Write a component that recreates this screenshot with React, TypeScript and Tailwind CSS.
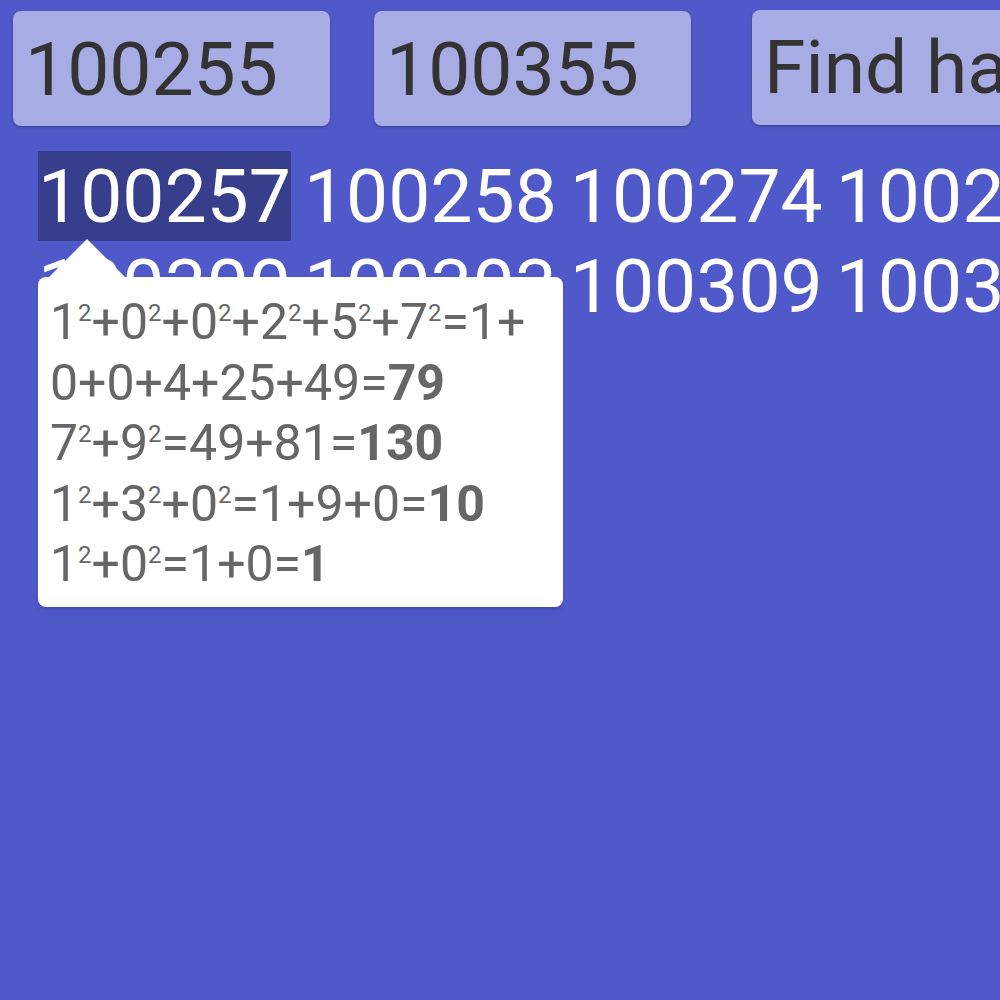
import React from "react";

const rows: string[][] = [
  ["100257", "100258", "100274", "100275", "100277", "100281", "100285", "100288", "100290", "100299"],
  ["100300", "100303", "100309", "100323", "100330", "100332", "100333", "100335", "100337", "100339"],
  ["100353"],
];

// each step: list of [digit, squared?] parts then the sum and result
type Part = { t: string; sq?: boolean };

const lines: { parts: Part[]; result?: string }[] = [
  {
    parts: [
      { t: "1", sq: true }, { t: "+" }, { t: "0", sq: true }, { t: "+" }, { t: "0", sq: true }, { t: "+" },
      { t: "2", sq: true }, { t: "+" }, { t: "5", sq: true }, { t: "+" }, { t: "7", sq: true }, { t: "=1+" },
    ],
  },
  { parts: [{ t: "0+0+4+25+49=" }], result: "79" },
  { parts: [{ t: "7", sq: true }, { t: "+" }, { t: "9", sq: true }, { t: "=49+81=" }], result: "130" },
  {
    parts: [{ t: "1", sq: true }, { t: "+" }, { t: "3", sq: true }, { t: "+" }, { t: "0", sq: true }, { t: "=1+9+0=" }],
    result: "10",
  },
  { parts: [{ t: "1", sq: true }, { t: "+" }, { t: "0", sq: true }, { t: "=1+0=" }], result: "1" },
];

const Tooltip: React.FC = () => {
  return (
    <div className="absolute left-0 top-full z-10 mt-[36px] w-[525px]">
      <div className="absolute left-[11px] top-[-38px] h-0 w-0 border-x-[38px] border-b-[38px] border-x-transparent border-b-white" />
      <div className="rounded-lg bg-white px-3 pt-[15px] pb-[12px] text-[50px] leading-[60.5px] text-[#666] shadow-md whitespace-nowrap">
        {lines.map((line, i) => (
          <div key={i}>
            {line.parts.map((p, j) => (
              <React.Fragment key={j}>
                {p.t}
                {p.sq && <sup className="top-[-18px] text-[24px]">2</sup>}
              </React.Fragment>
            ))}
            {line.result && <span className="font-bold">{line.result}</span>}
          </div>
        ))}
      </div>
    </div>
  );
};

export default function App() {
  return (
    <div className="h-[1000px] w-full overflow-hidden bg-[#5059c9] font-['Roboto',sans-serif]">
      <div className="flex items-start pl-[13px] pt-[10px]">
        <input
          readOnly
          value="100255"
          className="mt-px h-[115px] w-[317px] shrink-0 rounded-lg bg-white/50 px-3 text-[75px] text-[#333] shadow-[0_1px_3px_rgba(0,0,0,0.3)] outline-none"
        />
        <input
          readOnly
          value="100355"
          className="ml-[44px] mt-px h-[115px] w-[317px] shrink-0 rounded-lg bg-white/50 px-3 text-[75px] text-[#333] shadow-[0_1px_3px_rgba(0,0,0,0.3)] outline-none"
        />
        <button className="ml-[61px] h-[115px] shrink-0 whitespace-nowrap rounded-lg bg-white/50 px-3 text-[75px] text-[#333] shadow-[0_1px_3px_rgba(0,0,0,0.3)]">
          Find happy numbers
        </button>
      </div>

      <div className="mt-[25px] pl-[38px] text-[75px] leading-[1.2] text-white">
        {rows.map((row, r) => (
          <div key={r} className="whitespace-nowrap">
            {row.map((n, i) =>
              r === 0 && i === 0 ? (
                <span key={n} className="relative mr-[13px] inline-block bg-black/30">
                  {n}
                  <Tooltip />
                </span>
              ) : (
                <span key={n} className="mr-[13px] inline-block">
                  {n}
                </span>
              )
            )}
          </div>
        ))}
      </div>
    </div>
  );
}
